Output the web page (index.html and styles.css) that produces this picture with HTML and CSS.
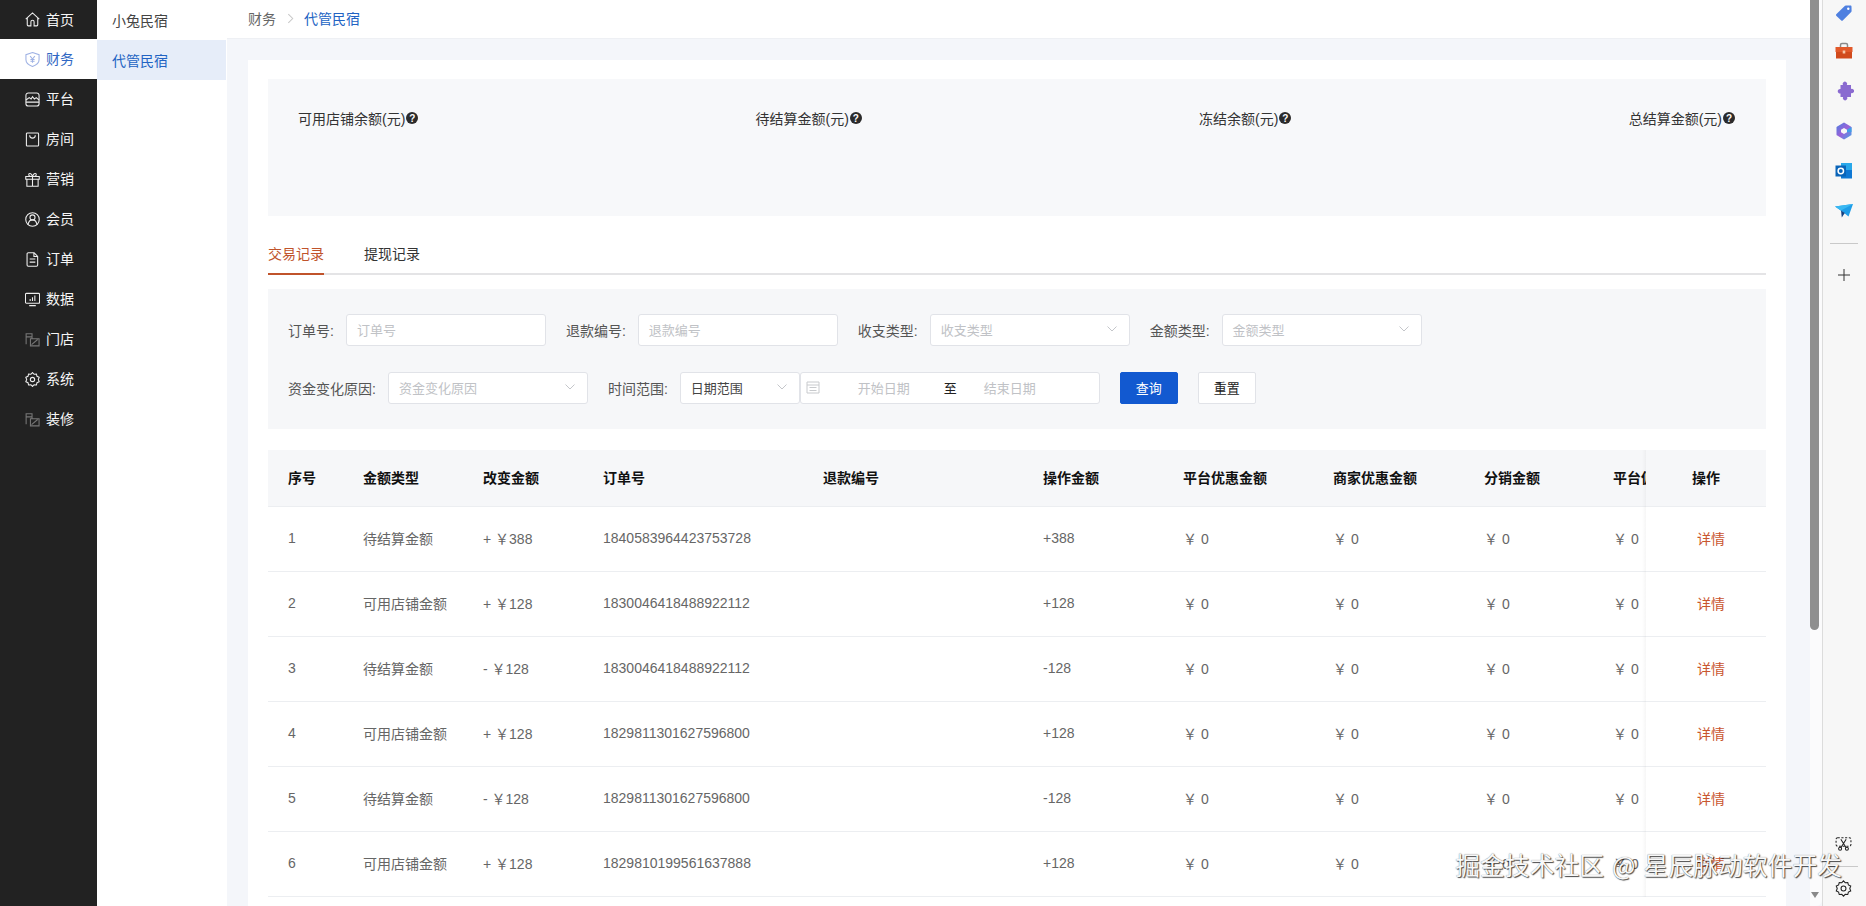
FILE: index.html
```html
<!DOCTYPE html>
<html lang="zh-CN">
<head>
<meta charset="utf-8">
<title>财务 - 代管民宿</title>
<link rel="stylesheet" href="styles.css">
</head>
<body>
<div class="app">
  <nav class="sidebar">
    <a class="nav-item"><svg class="nav-icon" viewBox="0 0 16 16"><path d="M.8 7.600 8 1l7.200 6.600M2.400 6.300v7.400a1.100 1.100 0 0 0 1.100 1.100h2.800v-4.300a1.700 1.700 0 0 1 3.400 0v4.300h2.800a1.100 1.100 0 0 0 1.100-1.100V6.300"/></svg><span class="nav-text">首页</span></a>
    <a class="nav-item active"><svg class="nav-icon" viewBox="0 0 16 16"><path d="M8 .6l7 2.300v5.400c0 3.300-3.200 5.800-7 7.100-3.800-1.300-7-3.800-7-7.100V2.900z"/><path d="M5.500 4.500 8 7.500l2.500-3M8 7.500v4M5.800 8h4.400M5.800 9.800h4.400"/></svg><span class="nav-text">财务</span></a>
    <a class="nav-item"><svg class="nav-icon" viewBox="0 0 16 16"><path d="M3.500 1h9a2.500 2.500 0 0 1 2.500 2.500v9a2.500 2.500 0 0 1-2.500 2.500h-9A2.500 2.500 0 0 1 1 12.500v-9A2.500 2.500 0 0 1 3.500 1z"/><path d="M1 8.500l3.500-2.500 2 1.500L8 5l2 2.500 2-1.500 3 2.500M1 10.800h14"/></svg><span class="nav-text">平台</span></a>
    <a class="nav-item"><svg class="nav-icon" viewBox="0 0 16 16"><path d="M2.500 1h11a1 1 0 0 1 1 1v12a1 1 0 0 1-1 1h-11a1 1 0 0 1-1-1V2a1 1 0 0 1 1-1z"/><path d="M5 3.500c0 4 6 4 6 0"/></svg><span class="nav-text">房间</span></a>
    <a class="nav-item"><svg class="nav-icon" viewBox="0 0 16 16"><path d="M.8 4.800h14.400v3H.8zM2 7.800v7.400h12V7.800M8 4.800v10.400M8 4.800C6 4.800 4 4 4 2.600S6.800.6 8 4.800zM8 4.800c2 0 4-.8 4-2.200S9.200.6 8 4.800z"/></svg><span class="nav-text">营销</span></a>
    <a class="nav-item"><svg class="nav-icon" viewBox="0 0 16 16"><circle cx="8" cy="8" r="7.200"/><circle cx="8" cy="5.800" r="2.700"/><path d="M3.200 13.400c.5-2.800 2.400-5 4.800-5s4.300 2.200 4.800 5"/></svg><span class="nav-text">会员</span></a>
    <a class="nav-item"><svg class="nav-icon" viewBox="0 0 16 16"><path d="M3.500.8h6.200l3.800 3.900v9.200a1.300 1.300 0 0 1-1.300 1.300H3.500a1.300 1.300 0 0 1-1.300-1.300V2.100A1.300 1.300 0 0 1 3.500.8z"/><path d="M5 7.500h6M5 10.800h6M9.500 1v3.800h4"/></svg><span class="nav-text">订单</span></a>
    <a class="nav-item"><svg class="nav-icon" viewBox="0 0 16 16"><path d="M1.500 1.500h13a1 1 0 0 1 1 1v8.500a1 1 0 0 1-1 1h-13a1 1 0 0 1-1-1V2.500a1 1 0 0 1 1-1zM4.500 14.500h7"/><path d="M5.500 9.500V7.500M8 9.500V5.500M10.500 9.500V3.800"/></svg><span class="nav-text">数据</span></a>
    <a class="nav-item dim"><svg class="nav-icon" viewBox="0 0 16 16"><path d="M1.200 13V1.800h6.300v3.400h-6.300M7.500 5.200v2M5.800 14.800h9.200V7.200H5.800zM7 13.500l6.500-5.500"/></svg><span class="nav-text">门店</span></a>
    <a class="nav-item"><svg class="nav-icon" viewBox="0 0 16 16"><path d="M8 .6l1.700 1.800 2.500-.2.600 2.400 2.300 1.100-.9 2.300.9 2.300-2.300 1.100-.6 2.400-2.500-.2L8 15.400l-1.700-1.800-2.500.2-.6-2.400-2.300-1.100.9-2.300-.9-2.300 2.300-1.100.6-2.400 2.500.2z"/><circle cx="8" cy="8" r="2.300"/></svg><span class="nav-text">系统</span></a>
    <a class="nav-item dim"><svg class="nav-icon" viewBox="0 0 16 16"><path d="M1.200 13V1.800h6.300v3.400h-6.300M7.500 5.200v2M5.800 14.800h9.200V7.200H5.800zM7 13.500l6.500-5.500"/></svg><span class="nav-text">装修</span></a>
  </nav>

  <aside class="submenu">
    <a class="sub-item">小兔民宿</a>
    <a class="sub-item active">代管民宿</a>
  </aside>

  <div class="main">
    <header class="topbar">
      <span class="crumb">财务</span>
      <svg class="crumb-sep" viewBox="0 0 8 12"><path d="M1.500 1l5 5-5 5"/></svg>
      <span class="crumb current">代管民宿</span>
    </header>
    <main class="content">
      <section class="card">
        <div class="stats">
          <div class="stat">可用店铺余额(元)<i class="help">?</i></div>
          <div class="stat">待结算金额(元)<i class="help">?</i></div>
          <div class="stat">冻结余额(元)<i class="help">?</i></div>
          <div class="stat">总结算金额(元)<i class="help">?</i></div>
        </div>

        <div class="tabs">
          <a class="tab active">交易记录</a>
          <a class="tab">提现记录</a>
        </div>

        <form class="filters">
          <div class="filter-row">
            <label class="field"><span class="field-label">订单号:</span><span class="control"><span class="placeholder">订单号</span></span></label>
            <label class="field"><span class="field-label">退款编号:</span><span class="control"><span class="placeholder">退款编号</span></span></label>
            <label class="field"><span class="field-label">收支类型:</span><span class="control select"><span class="placeholder">收支类型</span><svg class="chevron" viewBox="0 0 10 6"><path d="M.5.500 5 5 9.500.500"/></svg></span></label>
            <label class="field"><span class="field-label">金额类型:</span><span class="control select"><span class="placeholder">金额类型</span><svg class="chevron" viewBox="0 0 10 6"><path d="M.5.500 5 5 9.500.500"/></svg></span></label>
          </div>
          <div class="filter-row">
            <label class="field"><span class="field-label">资金变化原因:</span><span class="control select"><span class="placeholder">资金变化原因</span><svg class="chevron" viewBox="0 0 10 6"><path d="M.5.500 5 5 9.500.500"/></svg></span></label>
            <div class="field joined">
              <span class="field-label">时间范围:</span>
              <span class="control select narrow"><span class="value">日期范围</span><svg class="chevron" viewBox="0 0 10 6"><path d="M.5.500 5 5 9.500.500"/></svg></span>
              <span class="control range">
                <svg class="calendar" viewBox="0 0 14 14"><path d="M1 2h12v11H1zM1 5h12M3.500 7.500h7M3.500 10.500h7"/></svg>
                <span class="range-part placeholder">开始日期</span>
                <span class="range-to">至</span>
                <span class="range-part end placeholder">结束日期</span>
              </span>
            </div>
            <button class="btn primary" type="button">查询</button>
            <button class="btn" type="button">重置</button>
          </div>
        </form>

        <div class="table-wrap">
          <table class="records">
            <colgroup>
              <col class="c-index"><col class="c-type"><col class="c-change"><col class="c-order"><col class="c-refund"><col class="c-amount"><col class="c-promo"><col class="c-merchant"><col class="c-share"><col class="c-clip"><col class="c-action">
            </colgroup>
            <thead>
              <tr><th>序号</th><th>金额类型</th><th>改变金额</th><th>订单号</th><th>退款编号</th><th>操作金额</th><th>平台优惠金额</th><th>商家优惠金额</th><th>分销金额</th><th>平台佣金</th><th class="fixed">操作</th></tr>
            </thead>
            <tbody>
              <tr><td>1</td><td>待结算金额</td><td>+ ￥388</td><td>1840583964423753728</td><td></td><td>+388</td><td>￥ 0</td><td>￥ 0</td><td>￥ 0</td><td>￥ 0</td><td class="fixed"><a class="detail">详情</a></td></tr>
              <tr><td>2</td><td>可用店铺金额</td><td>+ ￥128</td><td>1830046418488922112</td><td></td><td>+128</td><td>￥ 0</td><td>￥ 0</td><td>￥ 0</td><td>￥ 0</td><td class="fixed"><a class="detail">详情</a></td></tr>
              <tr><td>3</td><td>待结算金额</td><td>- ￥128</td><td>1830046418488922112</td><td></td><td>-128</td><td>￥ 0</td><td>￥ 0</td><td>￥ 0</td><td>￥ 0</td><td class="fixed"><a class="detail">详情</a></td></tr>
              <tr><td>4</td><td>可用店铺金额</td><td>+ ￥128</td><td>1829811301627596800</td><td></td><td>+128</td><td>￥ 0</td><td>￥ 0</td><td>￥ 0</td><td>￥ 0</td><td class="fixed"><a class="detail">详情</a></td></tr>
              <tr><td>5</td><td>待结算金额</td><td>- ￥128</td><td>1829811301627596800</td><td></td><td>-128</td><td>￥ 0</td><td>￥ 0</td><td>￥ 0</td><td>￥ 0</td><td class="fixed"><a class="detail">详情</a></td></tr>
              <tr><td>6</td><td>可用店铺金额</td><td>+ ￥128</td><td>1829810199561637888</td><td></td><td>+128</td><td>￥ 0</td><td>￥ 0</td><td>￥ 0</td><td>￥ 0</td><td class="fixed"><a class="detail">详情</a></td></tr>
            </tbody>
          </table>
        </div>
      </section>
    </main>
  </div>

  <div class="scrollbar">
    <div class="scroll-thumb"></div>
    <div class="scroll-arrow"></div>
  </div>

  <aside class="edge">
    <div class="edge-top">
      <span class="edge-slot"><svg class="edge-icon" viewBox="0 -2.500 20 20"><path d="M2.500 10.500 11 2.300a1.500 1.500 0 0 1 1-.4l4.500.1c.7 0 1 .5 1 1l.1 4.500a1.500 1.500 0 0 1-.4 1L9 16.800a1.400 1.400 0 0 1-2 0l-4.500-4.300a1.400 1.400 0 0 1 0-2z" fill="#4f80e0"/><circle cx="14.300" cy="5.200" r="1.200" fill="#fff"/></svg></span>
      <span class="edge-slot"><svg class="edge-icon" viewBox="0 0 20 20"><path d="M6.500 6V4a1.500 1.500 0 0 1 1.500-1.500h4A1.500 1.500 0 0 1 13.500 4v2" fill="none" stroke="#8a8a8a" stroke-width="1.500"/><path d="M1.500 6h17v5h-17z" fill="#e2592a"/><path d="M2 11h16v6.500H2z" fill="#d14a1c"/><path d="M8.700 9.500h2.600v3H8.700z" fill="#f5c7a8"/></svg></span>
      <span class="edge-slot"><svg class="edge-icon" viewBox="0 1 20 20"><path d="M6.500 5H9a2.200 2.200 0 1 1 3.800 0h4.200v4a2.200 2.200 0 1 1 0 4v4h-4a2.200 2.200 0 1 1-3.800 0H6.500v-3.500a2.300 2.300 0 1 1 0-4.500z" fill="#8a6ad0"/></svg></span>
      <span class="edge-slot"><svg class="edge-icon" viewBox="0 0 20 20"><defs><linearGradient id="cop" x1="0" y1="0" x2="1" y2="1"><stop offset="0" stop-color="#4a7fe0"/><stop offset=".5" stop-color="#9a62d8"/><stop offset="1" stop-color="#3fa7e8"/></linearGradient></defs><path d="M10 1.500l6.800 3.900c.5.300.7.700.7 1.200v6.800c0 .5-.2.900-.7 1.200L10 18.500l-6.800-3.900c-.5-.3-.7-.7-.7-1.200V6.600c0-.5.2-.9.700-1.200z" fill="url(#cop)"/><path d="M10 7l3 1.700v2.600L10 13l-3-1.700V8.700z" fill="#f7f7f7"/><path d="M13 8.700l4.500-2.700v5L13 11.300z" fill="#3f9fe8"/></svg></span>
      <span class="edge-slot"><svg class="edge-icon" viewBox="0 0 20 20"><path d="M7 2h11v15H7z" fill="#28a8ea"/><path d="M7 9h11v8.500H7z" fill="#0f78d4"/><path d="M1.500 4.500h10.500v11H1.500z" fill="#0a64b8"/><circle cx="6.800" cy="10" r="2.700" fill="none" stroke="#fff" stroke-width="1.500"/></svg></span>
      <span class="edge-slot"><svg class="edge-icon" viewBox="0 0 20 20"><path d="M1 5.500 19 3l-4.500 12.500-5-4z" fill="#1e9de8"/><path d="M1 5.500l6 4 12-6.500z" fill="#39b8f2"/><path d="M7 9.500l.8 7 3-4.500z" fill="#123f80"/></svg></span>
      <div class="edge-divider"></div>
      <span class="edge-slot plus"><svg class="edge-icon" viewBox="0 0 14 14"><path d="M7 1v12M1 7h12" fill="none" stroke="#333" stroke-width="1"/></svg></span>
    </div>
    <div class="edge-bottom">
      <span class="edge-small"><svg class="edge-icon small" viewBox="0 0 16 16"><path d="M2.500 2.500h11a1.500 1.500 0 0 1 1.500 1.500v5a1.500 1.500 0 0 1-1.500 1.500h-11A1.500 1.500 0 0 1 1 9V4a1.500 1.500 0 0 1 1.500-1.500z" fill="none" stroke="#222" stroke-dasharray="2 1.500"/><path d="M5.500 4l5 8M10.500 4l-5 8" fill="none" stroke="#222"/><circle cx="4.800" cy="13" r="1.400" fill="none" stroke="#222"/><circle cx="11.200" cy="13" r="1.400" fill="none" stroke="#222"/></svg></span>
      <div class="edge-divider low"></div>
      <span class="edge-small"><svg class="edge-icon small" viewBox="0 0 16 16"><path d="M8 .8l1.600 1.700 2.400-.2.600 2.300 2.200 1.100-.9 2.300.9 2.300-2.200 1.100-.6 2.300-2.400-.2L8 15.200l-1.600-1.700-2.400.2-.6-2.300-2.200-1.100.9-2.300-.9-2.300 2.200-1.100.6-2.300 2.400.2z" fill="none" stroke="#222"/><circle cx="8" cy="8" r="2.300" fill="none" stroke="#222"/></svg></span>
    </div>
  </aside>
</div>
<div class="watermark">掘金技术社区 @ 星辰脉动软件开发</div>
</body>
</html>
```
FILE: styles.css
```css
* { box-sizing: border-box; }
html, body { margin: 0; height: 906px; overflow: hidden; }
body {
  position: relative;
  font-family: "Liberation Sans", "Noto Sans CJK SC", sans-serif;
  font-size: 14px;
  color: #333;
  background: #f4f6fa;
}
.app { display: flex; height: 906px; }

/* primary nav */
.sidebar { flex: 0 0 97px; background: #222; }
.nav-item {
  display: flex; align-items: center; gap: 6px;
  height: 40px; padding-left: 25px;
  color: #f6f6f6; font-size: 14px;
}
.nav-item:first-child { height: 39px; }
.nav-text { padding-bottom: 2px; }
.nav-icon { width: 15px; height: 15px; fill: none; stroke: #eee; stroke-width: 1.15; flex: none; }
.nav-item.active { background: #fff; color: #2f68c4; }
.nav-item.active .nav-icon { stroke: #9fb2e4; }
.nav-item.dim .nav-icon { stroke: #777; }

/* secondary nav */
.submenu { flex: 0 0 130px; background: #fff; padding-right: 1px; }
.sub-item { display: flex; align-items: center; height: 40px; padding-left: 15px; color: #444; }
.sub-item.active { background: #e6edf9; color: #2263c3; }

.main { flex: 1 1 0; min-width: 0; display: flex; flex-direction: column; }
.topbar {
  display: flex; align-items: center; flex: none;
  height: 39px; padding: 0 0 2px 21px;
  background: #fff; border-bottom: 1px solid #eef0f4;
}
.crumb { color: #666; }
.crumb.current { color: #2263c3; }
.crumb-sep { width: 7px; height: 11px; margin: 0 10px 0 11px; fill: none; stroke: #c8c8c8; stroke-width: 1.2; }

.content { flex: 1 1 0; min-height: 0; overflow: hidden; padding: 21px 24px 0 21px; }
.card { background: #fff; padding: 19px 20px 0; height: 900px; }

.stats {
  display: flex; justify-content: space-between;
  height: 137px; padding: 29px 31px 0 30px;
  background: #f7f8fa;
}
.stat { display: flex; align-items: center; height: 20px; color: #333; }
.help {
  display: inline-flex; align-items: center; justify-content: center;
  width: 12px; height: 12px; margin-left: 1px;
  border-radius: 50%; background: #2b2b2b; color: #fff;
  font-size: 10px; font-weight: 700; font-style: normal;
}

.tabs { display: flex; gap: 40px; margin-top: 20px; height: 39px; border-bottom: 2px solid #e4e4e6; }
.tab { display: block; height: 39px; line-height: 37px; color: #333; border-bottom: 2px solid transparent; }
.tab.active { color: #c0532b; border-bottom-color: #c0532b; }

.filters {
  margin-top: 14px; padding: 25px 20px;
  background: #f6f7f9;
  display: flex; flex-direction: column; gap: 26px;
}
.filter-row { display: flex; gap: 20px; align-items: center; }
.field { display: flex; align-items: center; }
.field-label { color: #555; margin-right: 12px; white-space: nowrap; padding-bottom: 1px; }
.control {
  display: flex; align-items: center;
  width: 200px; height: 32px; padding: 0 10px 2px;
  background: #fff; border: 1px solid #e1e3e8; border-radius: 3px;
  font-size: 13px;
}
.select { justify-content: space-between; padding-right: 12px; }
.narrow { width: 120px; }
.placeholder { color: #c0c2c6; }
.value { color: #444; }
.chevron { width: 10px; height: 6px; fill: none; stroke: #c4c6ca; stroke-width: 1; }
.range { width: 300px; padding: 0 0 2px 5px; }
.calendar { width: 14px; height: 14px; margin-right: 4px; flex: none; fill: none; stroke: #c8cacd; stroke-width: 1; }
.range-part { flex: none; width: 120px; text-align: center; }
.range-part.end { width: 106px; }
.range-to { color: #222; flex: none; }

.btn {
  width: 58px; height: 32px; padding: 0 0 2px;
  background: #fff; border: 1px solid #e1e3e8; border-radius: 2px;
  font: inherit; font-size: 13px; color: #222;
}
.btn.primary { background: #1259d0; border-color: #1259d0; color: #fff; }

.table-wrap { margin-top: 21px; overflow: hidden; }
.records { width: 1498px; table-layout: fixed; border-collapse: separate; border-spacing: 0; }
.c-index { width: 75px; }
.c-type { width: 120px; }
.c-change { width: 120px; }
.c-order { width: 220px; }
.c-refund { width: 220px; }
.c-amount { width: 140px; }
.c-promo { width: 150px; }
.c-merchant { width: 151px; }
.c-share { width: 129px; }
.c-clip { width: 53px; }
.c-action { width: 120px; }
.records th, .records td {
  padding: 0 0 2px 20px; text-align: left;
  white-space: nowrap; overflow: hidden;
  border-bottom: 1px solid #eceef1;
}
.records th { height: 57px; background: #f6f7f9; color: #111; font-weight: 700; }
.records td { height: 65px; color: #666; }
.records .fixed {
  position: relative; padding: 0 0 2px; text-align: center;
  overflow: visible;
}
.records .fixed::before {
  content: ""; position: absolute; left: -4px; top: 0; bottom: -1px; width: 4px;
  background: linear-gradient(to right, rgba(0, 0, 0, 0), rgba(0, 0, 0, .035));
}
.detail { margin-left: 10px; color: #c9562f; }

.scrollbar { position: relative; flex: 0 0 12px; background: #fbfbfc; border-bottom-right-radius: 6px; }
.scroll-thumb { width: 9px; height: 630px; background: #8f8f8f; border-radius: 0 0 5px 5px; }
.scroll-arrow {
  position: absolute; left: 1px; bottom: 8px;
  border: 4px solid transparent; border-top: 6px solid #8a8a8a; border-bottom: 0;
}

.edge {
  flex: 0 0 44px; padding-right: 2px; background: #f7f7f7; border-left: 1px solid #dcdcdc;
  display: flex; flex-direction: column; justify-content: space-between; align-items: center;
}
.edge-top { display: flex; flex-direction: column; align-items: center; margin-top: -9px; }
.edge-slot { display: flex; align-items: center; justify-content: center; width: 40px; height: 40px; }
.edge-icon { width: 20px; height: 20px; display: block; }
.edge-icon.small { width: 17px; height: 17px; }
.edge-divider { width: 28px; height: 1px; background: #c9c9c9; margin-top: 12px; }
.edge-divider.low { margin: 11px 0 9px; }
.plus { margin-top: 11px; }
.plus .edge-icon { width: 14px; height: 14px; }
.edge-bottom { display: flex; flex-direction: column; align-items: center; padding-bottom: 6px; }
.edge-small { display: flex; align-items: center; justify-content: center; width: 24px; height: 24px; }

.watermark {
  position: absolute; right: 24px; top: 847px;
  font-family: "Noto Sans CJK SC", sans-serif; font-size: 24.8px; line-height: 34px;
  word-spacing: 2.5px;
  white-space: pre; color: #f8f8f8;
  text-shadow: 1px 1px 1px rgba(0, 0, 0, .7), 0 0 1px rgba(0, 0, 0, .55);
}
```
